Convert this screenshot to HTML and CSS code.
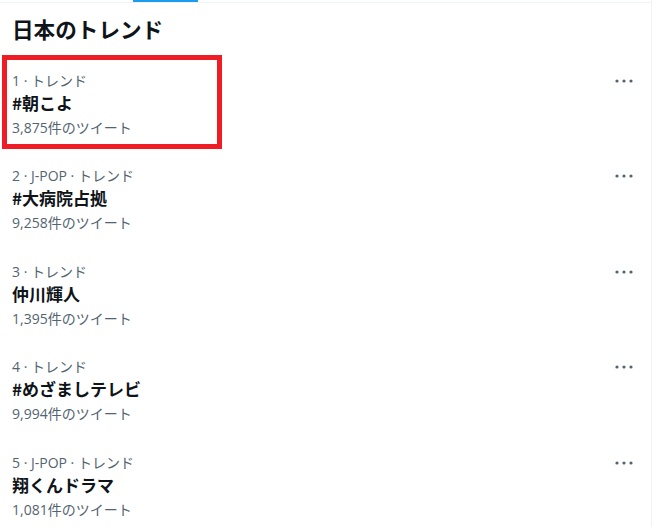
FILE: index.html
```html
<!DOCTYPE html>
<html lang="ja">
<head>
<meta charset="utf-8">
<link rel="stylesheet" href="styles.css">
</head>
<body>
<div class="panel">
  <div class="tabs"><div class="indicator"></div></div>
  <h2 class="header">日本のトレンド</h2>
  <div class="item">
    <div class="texts">
      <div class="meta">1 · トレンド</div>
      <div class="name">#朝こよ</div>
      <div class="count">3,875件のツイート</div>
    </div>
    <svg class="more" viewBox="0 0 20 20" width="20" height="20"><circle cx="3" cy="10" r="1.6"/><circle cx="10" cy="10" r="1.6"/><circle cx="17" cy="10" r="1.6"/></svg>
    <div class="highlight"></div>
  </div>
  <div class="item">
    <div class="texts">
      <div class="meta">2 · J-POP · トレンド</div>
      <div class="name">#大病院占拠</div>
      <div class="count">9,258件のツイート</div>
    </div>
    <svg class="more" viewBox="0 0 20 20" width="20" height="20"><circle cx="3" cy="10" r="1.6"/><circle cx="10" cy="10" r="1.6"/><circle cx="17" cy="10" r="1.6"/></svg>
  </div>
  <div class="item">
    <div class="texts">
      <div class="meta">3 · トレンド</div>
      <div class="name">仲川輝人</div>
      <div class="count">1,395件のツイート</div>
    </div>
    <svg class="more" viewBox="0 0 20 20" width="20" height="20"><circle cx="3" cy="10" r="1.6"/><circle cx="10" cy="10" r="1.6"/><circle cx="17" cy="10" r="1.6"/></svg>
  </div>
  <div class="item">
    <div class="texts">
      <div class="meta">4 · トレンド</div>
      <div class="name">#めざましテレビ</div>
      <div class="count">9,994件のツイート</div>
    </div>
    <svg class="more" viewBox="0 0 20 20" width="20" height="20"><circle cx="3" cy="10" r="1.6"/><circle cx="10" cy="10" r="1.6"/><circle cx="17" cy="10" r="1.6"/></svg>
  </div>
  <div class="item">
    <div class="texts">
      <div class="meta">5 · J-POP · トレンド</div>
      <div class="name">翔くんドラマ</div>
      <div class="count">1,081件のツイート</div>
    </div>
    <svg class="more" viewBox="0 0 20 20" width="20" height="20"><circle cx="3" cy="10" r="1.6"/><circle cx="10" cy="10" r="1.6"/><circle cx="17" cy="10" r="1.6"/></svg>
  </div>
</div>
</body>
</html>
```
FILE: styles.css
```css
html, body {
  margin: 0;
  padding: 0;
  background: #ffffff;
}
body {
  font-family: "Open Sans", "Noto Sans CJK JP", sans-serif;
  color: #0f1419;
  overflow: hidden;
}
.panel {
  width: 651px;
  height: 527px;
  border-right: 1px solid #eff3f4;
}
.tabs {
  height: 2px;
  border-bottom: 1px solid #eff3f4;
}
.indicator {
  margin-left: 133px;
  width: 65px;
  height: 2px;
  background: #1d9bf0;
}
.header {
  margin: 0;
  padding: 12px 12px 15px;
  font-size: 21.6px;
  line-height: 28px;
  font-weight: 700;
  font-family: "Noto Sans CJK JP", sans-serif;
}
.item {
  position: relative;
  display: flex;
  justify-content: space-between;
  align-items: flex-start;
  padding: 12.75px 17px 12.75px 12px;
}
.texts {
  display: flex;
  flex-direction: column;
}
.meta {
  font-size: 14px;
  line-height: 20px;
  color: #536471;
}
.name {
  font-size: 17px;
  line-height: 24px;
  font-weight: 700;
  font-family: "Noto Sans CJK JP", sans-serif;
}
.count {
  font-size: 14px;
  line-height: 26px;
  color: #536471;
}
.more {
  fill: #536471;
  margin-top: 0;
}
.highlight {
  position: absolute;
  left: 2px;
  top: -3px;
  width: 220px;
  height: 94px;
  box-sizing: border-box;
  border: 5px solid #ee1c25;
  pointer-events: none;
}
```
